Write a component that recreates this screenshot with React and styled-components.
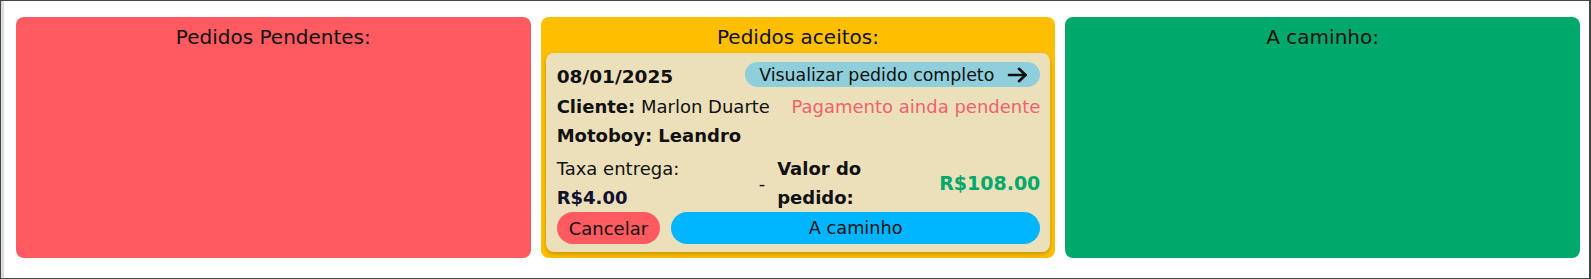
import React from "react";
import styled, { createGlobalStyle } from "styled-components";

const GlobalStyle = createGlobalStyle`
  html, body { margin: 0; padding: 0; background: #ffffff; }
  body { font-family: "DejaVu Sans", "Noto Sans", sans-serif; color: #111111; }
  * { box-sizing: border-box; }
`;

const Frame = styled.div`
  width: 1591px;
  height: 279px;
  border: 1px solid #454545;
  border-right-width: 2px;
  box-shadow: inset 3px 0 0 #dcdcdc;
  padding: 16px 9px 0 15px;
  background: #ffffff;
`;

const Board = styled.div`
  display: grid;
  grid-template-columns: repeat(3, 1fr);
  gap: 10px;
  height: 241px;
`;

const Column = styled.section`
  background: ${(p) => p.$bg};
  border-radius: 8px;
  padding: 6px 5px 5px;
  display: flex;
  flex-direction: column;
`;

const ColumnTitle = styled.h2`
  margin: 0 0 2px;
  font-size: 20px;
  font-weight: 400;
  line-height: 28px;
  text-align: center;
  color: #111111;
`;

const Card = styled.article`
  background: #ebe0ba;
  border-radius: 8px;
  box-shadow: 0 2px 4px rgba(0, 0, 0, 0.22);
  padding: 9px 10px 8px 11px;
  display: flex;
  flex-direction: column;
  font-size: 18px;
`;

const TopRow = styled.div`
  display: flex;
  justify-content: space-between;
  align-items: flex-start;
  height: 30px;
`;

const DateText = styled.span`
  font-weight: 700;
  font-size: 18.5px;
  line-height: 30px;
`;

const ViewButton = styled.button`
  display: flex;
  align-items: center;
  gap: 13px;
  height: 25px;
  padding: 0 12px 0 14px;
  border: none;
  border-radius: 13px;
  background: #8fcfdb;
  font-family: inherit;
  font-size: 17.4px;
  color: #111111;
  cursor: pointer;
`;

const InfoRow = styled.div`
  display: flex;
  justify-content: space-between;
  align-items: baseline;
  line-height: ${(p) => p.$lh}px;
`;

const Label = styled.b`
  font-weight: 700;
`;

const Pending = styled.span`
  color: #f2626a;
`;

const TotalsRow = styled.div`
  display: flex;
  align-items: center;
  margin-top: 4px;
  line-height: 29px;
`;

const FeeBlock = styled.div`
  width: 190px;
`;

const FeeValue = styled.b`
  font-weight: 700;
  color: #130f2e;
`;

const Dash = styled.span`
  margin: 0 12px;
`;

const OrderLabel = styled.b`
  width: 100px;
  font-weight: 700;
`;

const OrderValue = styled.b`
  margin-left: auto;
  font-size: 19px;
  font-weight: 700;
  color: #00a86b;
`;

const Actions = styled.div`
  display: flex;
  gap: 11px;
  height: 32px;
`;

const PillButton = styled.button`
  height: 32px;
  border: none;
  border-radius: 16px;
  font-family: inherit;
  font-size: 18px;
  color: #111111;
  background: ${(p) => p.$bg};
  padding: 0 12px;
  cursor: pointer;
`;

const RouteButton = styled(PillButton)`
  flex: 1;
  font-size: 17.7px;
`;

const Arrow = () => (
  <svg width="21" height="16" viewBox="0 0 21 16" fill="none" stroke="#111" strokeWidth="2.6" strokeLinecap="round" strokeLinejoin="round">
    <path d="M2 8H18.5" />
    <path d="M12 1.8L18.5 8L12 14.2" />
  </svg>
);

export default function App() {
  return (
    <>
      <GlobalStyle />
      <Frame>
        <Board>
          <Column $bg="#ff5a60">
            <ColumnTitle>Pedidos Pendentes:</ColumnTitle>
          </Column>
          <Column $bg="#fdbf00">
            <ColumnTitle>Pedidos aceitos:</ColumnTitle>
            <Card>
              <TopRow>
                <DateText>08/01/2025</DateText>
                <ViewButton>
                  Visualizar pedido completo
                  <Arrow />
                </ViewButton>
              </TopRow>
              <InfoRow $lh={30}>
                <span>
                  <Label>Cliente:</Label> Marlon Duarte
                </span>
                <Pending>Pagamento ainda pendente</Pending>
              </InfoRow>
              <InfoRow $lh={28}>
                <Label>Motoboy: Leandro</Label>
              </InfoRow>
              <TotalsRow>
                <FeeBlock>
                  Taxa entrega: <FeeValue>R$4.00</FeeValue>
                </FeeBlock>
                <Dash>-</Dash>
                <OrderLabel>Valor do pedido:</OrderLabel>
                <OrderValue>R$108.00</OrderValue>
              </TotalsRow>
              <Actions>
                <PillButton $bg="#ff5a60">Cancelar</PillButton>
                <RouteButton $bg="#00b5ff">A caminho</RouteButton>
              </Actions>
            </Card>
          </Column>
          <Column $bg="#00a86b">
            <ColumnTitle>A caminho:</ColumnTitle>
          </Column>
        </Board>
      </Frame>
    </>
  );
}
